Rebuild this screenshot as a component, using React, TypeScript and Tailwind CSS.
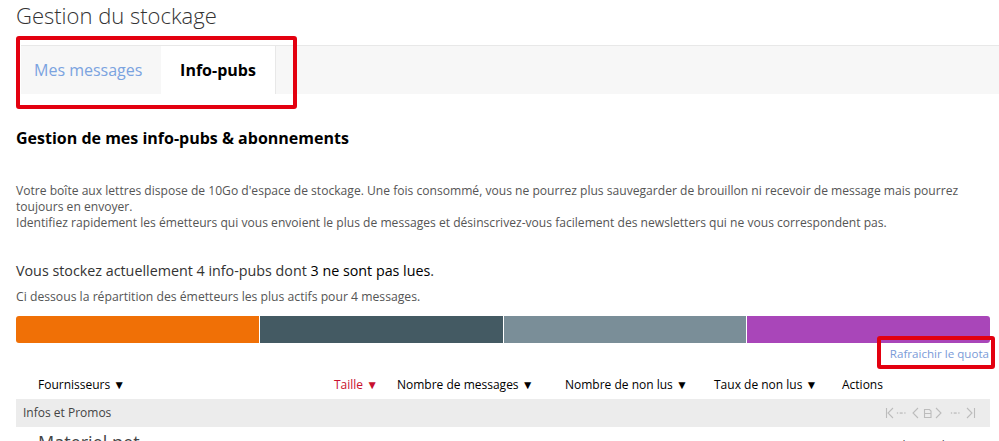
import React from 'react';

const segments = [
  { color: 'bg-[#f07006]' },
  { color: 'bg-[#445a63]' },
  { color: 'bg-[#7a8e98]' },
  { color: 'bg-[#a946b9]' },
];

function Dots({ x }: { x: number }) {
  return (
    <g fill="#bcbcbc" stroke="none">
      <circle cx={x} cy="6" r="0.8" />
      <rect x={x + 2.2} y="5.4" width="3" height="1.3" />
      <circle cx={x + 7.4} cy="6" r="0.8" />
    </g>
  );
}

function Pager() {
  return (
    <svg width="91" height="12" viewBox="0 0 91 12" fill="none" stroke="#bcbcbc" strokeWidth="1.1">
      {/* first */}
      <path d="M1.5 1v10M8 1L3 6l5 5" />
      <Dots x={12.5} />
      {/* prev */}
      <path d="M33 1l-5 5 5 5" />
      {/* page */}
      <path d="M39.5 2.5h5l1.5 1.5v6.5h-6.5zM39.5 6.5h6.5" />
      {/* next */}
      <path d="M51 1l5 5-5 5" />
      <Dots x={66.5} />
      {/* last */}
      <path d="M82 1l5 5-5 5M89.5 1v10" />
    </svg>
  );
}

export default function App() {
  return (
    <div className="w-[999px] h-[441px] overflow-hidden bg-white text-[#333] font-['Open_Sans',sans-serif]">
      {/* Title */}
      <h1 className="pl-4 pt-[2px] text-[22px] leading-[27px] font-light text-[#333]">Gestion du stockage</h1>

      {/* Tabs */}
      <div className="relative mt-[16px] ml-[21px] h-[49px] flex bg-[#f7f7f7] border-t border-[#e8e8e8]">
        <div className="w-[140px] flex items-center pl-[13px] text-[16px] text-[#7ba3e0]">Mes messages</div>
        <div className="w-[115px] flex items-center justify-center bg-white border-r border-[#e8e8e8] text-[16px] font-bold text-black">
          Info-pubs
        </div>
        <div className="absolute -left-[5px] -top-[10px] w-[281px] h-[73px] border-[4px] border-[#e3000f] rounded-[3px]" />
      </div>

      <div className="px-4">
        <h2 className="mt-[34px] text-[16px] leading-[20px] font-bold text-black">Gestion de mes info-pubs &amp; abonnements</h2>

        <div className="mt-[35px] w-[960px] text-[12.1px] leading-[16px] text-[#555]">
          <p>
            Votre boîte aux lettres dispose de 10Go d'espace de stockage. Une fois consommé, vous ne pourrez plus
            sauvegarder de brouillon ni recevoir de message mais pourrez toujours en envoyer.
          </p>
          <p>Identifiez rapidement les émetteurs qui vous envoient le plus de messages et désinscrivez-vous facilement des newsletters qui ne vous correspondent pas.</p>
        </div>

        <p className="mt-[30px] text-[14.3px] leading-[20px] text-[#333]">
          Vous stockez actuellement 4 info-pubs dont <span className="text-black">3 ne sont pas lues</span>.
        </p>
        <p className="mt-[8px] text-[12.2px] leading-[16px] text-[#555]">
          Ci dessous la répartition des émetteurs les plus actifs pour 4 messages.
        </p>

        {/* Quota bar */}
        <div className="mt-[11px] w-[974px] h-[27px] flex gap-px rounded-[3px] overflow-hidden bg-white">
          {segments.map((s, i) => (
            <div key={i} className={`flex-1 ${s.color}`} />
          ))}
        </div>

        <div className="relative flex justify-end w-[974px] pt-[2px]">
          <span className="text-[11.6px] leading-[18px] text-[#7a9bd8] pr-px">Rafraichir le quota</span>
          <div className="absolute -right-[5px] -top-[7px] w-[118px] h-[33px] border-[4px] border-[#e3000f] rounded-[3px]" />
        </div>

        {/* Table header */}
        <div className="mt-[14px] flex text-[12px] leading-[16px] text-black">
          <div className="w-[318px] pl-[22px]">Fournisseurs ▼</div>
          <div className="w-[63px] text-[#c8102e]">Taille ▼</div>
          <div className="w-[168px]">Nombre de messages ▼</div>
          <div className="w-[149px]">Nombre de non lus ▼</div>
          <div className="w-[128px]">Taux de non lus ▼</div>
          <div>Actions</div>
        </div>

        {/* Group row */}
        <div className="mt-[6px] w-[974px] h-[28px] bg-[#ececec] flex items-center justify-between pl-[7px] pr-[14px]">
          <span className="text-[12px] text-[#444]">Infos et Promos</span>
          <Pager />
        </div>

        <div className="flex items-start h-[30px] text-[18px] leading-[24px] text-[#444]">
          <div className="w-[389px] pl-[22px] pt-[3px]">Materiel.net</div>
          <div className="w-[435px] pt-[7px] text-[12px]">(...)</div>
          <div className="pt-[7px] text-[12px]">Supprimer les mails et se</div>
        </div>
      </div>
    </div>
  );
}
